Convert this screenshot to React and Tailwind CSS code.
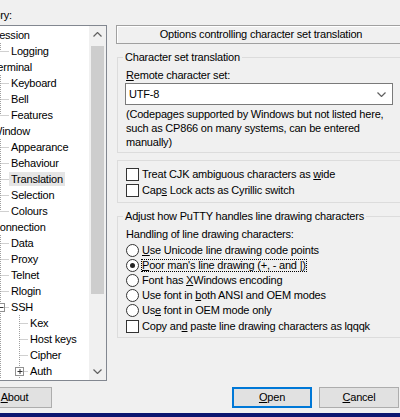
import React from "react";

const TREE = [
  { l: 0, t: "Session", box: "-", g: [] },
  { l: 1, t: "Logging", g: [true], last: true },
  { l: 0, t: "Terminal", box: "-", g: [] },
  { l: 1, t: "Keyboard", g: [true] },
  { l: 1, t: "Bell", g: [true] },
  { l: 1, t: "Features", g: [true], last: true },
  { l: 0, t: "Window", box: "-", g: [] },
  { l: 1, t: "Appearance", g: [true] },
  { l: 1, t: "Behaviour", g: [true] },
  { l: 1, t: "Translation", g: [true], sel: true },
  { l: 1, t: "Selection", g: [true] },
  { l: 1, t: "Colours", g: [true], last: true },
  { l: 0, t: "Connection", box: "-", g: [], last: true },
  { l: 1, t: "Data", g: [false] },
  { l: 1, t: "Proxy", g: [false] },
  { l: 1, t: "Telnet", g: [false] },
  { l: 1, t: "Rlogin", g: [false] },
  { l: 1, t: "SSH", box: "-", g: [false] },
  { l: 2, t: "Kex", g: [false, true] },
  { l: 2, t: "Host keys", g: [false, true] },
  { l: 2, t: "Cipher", g: [false, true] },
  { l: 2, t: "Auth", box: "+", g: [false, true] },
];

const DOT = "#a0a0a0";

function TreeLines({ item, first }) {
  const w = 29 + 19 * item.l;
  const cx = 20.5 + 19 * item.l;
  return (
    <svg width={w} height="16" className="shrink-0">
      {item.g.map((on, k) =>
        on ? (
          <line key={k} x1={20.5 + 19 * k} y1="0" x2={20.5 + 19 * k} y2="16" stroke={DOT} strokeDasharray="1 1" />
        ) : null
      )}
      <line x1={cx} y1={first ? 8 : 0} x2={cx} y2={item.last ? 8 : 16} stroke={DOT} strokeDasharray="1 1" />
      <line x1={item.box ? cx + 5 : cx} y1="8.5" x2={w} y2="8.5" stroke={DOT} strokeDasharray="1 1" />
      {item.box && (
        <g>
          <rect x={cx - 4} y="4.5" width="8" height="8" fill="#fff" stroke="#919191" />
          <line x1={cx - 2} y1="8.5" x2={cx + 3} y2="8.5" stroke="#333" />
          {item.box === "+" && <line x1={cx + 0.5} y1="6" x2={cx + 0.5} y2="11" stroke="#333" />}
        </g>
      )}
    </svg>
  );
}

function Chevron({ up, className }) {
  return (
    <svg width="9" height="5" viewBox="0 0 9 5" className={className}>
      <polyline
        points={up ? "0.5,4.5 4.5,0.5 8.5,4.5" : "0.5,0.5 4.5,4.5 8.5,0.5"}
        fill="none"
        stroke="#606060"
        strokeWidth="1.2"
      />
    </svg>
  );
}

function CheckRow({ children }) {
  return (
    <div className="flex items-center h-[16px]">
      <span className="ml-[1px] w-[13px] h-[13px] border border-[#333] bg-white shrink-0" />
      <span className="ml-[3px] leading-[14px] whitespace-nowrap">{children}</span>
    </div>
  );
}

function RadioRow({ checked, focus, children }) {
  return (
    <div className="flex items-center h-[15px]">
      <span className="ml-[1px] w-[13px] h-[13px] rounded-full border border-[#333] bg-white shrink-0 flex items-center justify-center">
        {checked && <span className="w-[5px] h-[5px] rounded-full bg-[#222]" />}
      </span>
      <span
        className={
          "ml-[3px] leading-[11px] whitespace-nowrap " +
          (focus ? "outline outline-1 outline-dotted outline-black" : "")
        }
      >
        {children}
      </span>
    </div>
  );
}

export default function App() {
  return (
    <div
      className="w-[400px] h-[417px] overflow-hidden bg-[#f0f0f0] text-black flex flex-col text-[11px] tracking-[-0.2px]"
      style={{ fontFamily: '"Liberation Sans", Arial, sans-serif' }}
    >
      <div className="flex h-[413px] shrink-0">
        {/* Left: category tree */}
        <div className="ml-[-40px] w-[147px] shrink-0 flex flex-col">
          <div className="mt-[8px] h-[14px] leading-[14px] pl-[6px] whitespace-nowrap">Category:</div>
          <div className="mt-[3px] h-[356px] border border-[#828790] bg-white flex overflow-hidden">
            <div className="flex-1 pt-[1px] overflow-hidden">
              {TREE.map((item, i) => (
                <div key={item.t} className="flex items-center h-[16px] whitespace-nowrap">
                  <TreeLines item={item} first={i === 0} />
                  <span className={"h-[14px] leading-[14px] px-[2px] " + (item.sel ? "bg-[#e5e5e5]" : "")}>
                    {item.t}
                  </span>
                </div>
              ))}
            </div>
            <div className="w-[17px] shrink-0 bg-[#f0f0f0] flex flex-col">
              <div className="h-[17px] flex items-center justify-center">
                <Chevron up />
              </div>
              <div className="flex-1 flex flex-col pt-[3px]">
                <div className="mx-[2px] h-[248px] bg-[#cdcdcd]" />
              </div>
              <div className="h-[17px] flex items-center justify-center">
                <Chevron />
              </div>
            </div>
          </div>
          <button className="mt-[6px] ml-[17px] w-[75px] h-[21px] border border-[#adadad] bg-[#e1e1e1] leading-[19px] text-center">
            <u className="underline-offset-1">A</u>bout
          </button>
        </div>

        {/* Right: panel */}
        <div className="ml-[9px] w-[290px] shrink-0 flex flex-col pt-[25px]">
          <div className="h-[19px] border border-[#a0a0a0] shadow-[inset_1px_1px_0_#fff] text-center leading-[17px] whitespace-nowrap">
            Options controlling character set translation
          </div>

          <fieldset className="mt-[6px] ml-[1px] w-[288px] border border-[#dcdcdc] pl-[7px] pb-[3px]">
            <legend className="ml-[-2px] px-[2px] leading-[14px] whitespace-nowrap">Character set translation</legend>
            <div className="mt-[4px] h-[14px] leading-[14px] pl-[1px]">
              <u className="underline-offset-1">R</u>emote character set:
            </div>
            <div className="mt-[1px] w-[268px] h-[22px] border border-[#7a7a7a] bg-white flex items-center justify-between pl-[3px] pr-[6px]">
              <span>UTF-8</span>
              <Chevron />
            </div>
            <div className="mt-[2px] leading-[14px] pl-[1px] whitespace-nowrap">
              (Codepages supported by Windows but not listed here,
              <br />
              such as CP866 on many systems, can be entered
              <br />
              manually)
            </div>
          </fieldset>

          <fieldset className="mt-[7px] ml-[1px] w-[288px] border border-[#dcdcdc] pl-[7px] pt-[5px] pb-[4px]">
            <CheckRow>
              Treat CJK ambiguous characters as <u className="underline-offset-1">w</u>ide
            </CheckRow>
            <CheckRow>
              Cap<u className="underline-offset-1">s</u> Lock acts as Cyrillic switch
            </CheckRow>
          </fieldset>

          <fieldset className="mt-[6px] ml-[1px] w-[288px] border border-[#dcdcdc] pl-[7px] pb-[3px]">
            <legend className="ml-[-2px] px-[2px] leading-[14px] whitespace-nowrap">
              Adjust how PuTTY handles line drawing characters
            </legend>
            <div className="mt-[4px] h-[14px] leading-[14px] pl-[1px]">Handling of line drawing characters:</div>
            <div className="mt-[2px]">
              <RadioRow>
                <u className="underline-offset-1">U</u>se Unicode line drawing code points
              </RadioRow>
              <RadioRow checked focus>
                <u className="underline-offset-1">P</u>oor man's line drawing (+, - and |)
              </RadioRow>
              <RadioRow>
                Font has <u className="underline-offset-1">X</u>Windows encoding
              </RadioRow>
              <RadioRow>
                Use font in <u className="underline-offset-1">b</u>oth ANSI and OEM modes
              </RadioRow>
              <RadioRow>
                Us<u className="underline-offset-1">e</u> font in OEM mode only
              </RadioRow>
              <CheckRow>
                Copy an<u className="underline-offset-1">d</u> paste line drawing characters as lqqqk
              </CheckRow>
            </div>
          </fieldset>

          <div className="mt-[49px] flex pl-[116px] gap-[7px]">
            <button className="w-[80px] h-[21px] border-2 border-[#0078d7] bg-[#e1e1e1] leading-[17px] text-center">
              <u className="underline-offset-1">O</u>pen
            </button>
            <button className="w-[80px] h-[21px] border border-[#adadad] bg-[#e1e1e1] leading-[19px] text-center">
              <u className="underline-offset-1">C</u>ancel
            </button>
          </div>
        </div>
      </div>
      <div className="flex-1 bg-[#0c1670]" />
    </div>
  );
}
